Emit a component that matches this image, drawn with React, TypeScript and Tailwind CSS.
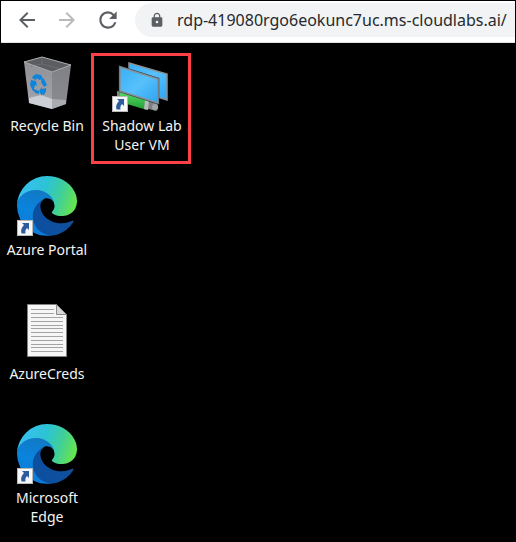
import type { ReactNode } from 'react';
import { MdArrowBack, MdArrowForward, MdLock, MdRefresh } from 'react-icons/md';

function ShortcutArrow() {
  return (
    <svg viewBox="0 0 16 16" className="absolute bottom-0 left-0 size-4" aria-hidden="true">
      <path d="M0 0h16v16H0z" fill="#b9b9b9" />
      <path d="M1 1h14v14H1z" fill="#f7f7f7" />
      <path d="M5 3h7v7l-2-2C8.500 9.500 8 11 8.500 13.500H4.500C3.500 10 4.500 7.500 7 5z" fill="#2d5c9e" />
    </svg>
  );
}

function EdgeIcon({ id }: { id: string }) {
  return (
    <svg viewBox="0 0 256 256" className="size-full" aria-hidden="true">
      <defs>
        <linearGradient id={`${id}-tail`} x1="60" y1="180" x2="235" y2="180" gradientUnits="userSpaceOnUse">
          <stop offset="0" stopColor="#0b4fa0" />
          <stop offset="1" stopColor="#10509e" />
        </linearGradient>
        <linearGradient id={`${id}-body`} x1="100" y1="60" x2="60" y2="240" gradientUnits="userSpaceOnUse">
          <stop offset="0" stopColor="#1278c4" />
          <stop offset="0.5" stopColor="#0a84dc" />
          <stop offset="1" stopColor="#0c7ad6" />
        </linearGradient>
        <linearGradient id={`${id}-wave`} x1="20" y1="60" x2="240" y2="135" gradientUnits="userSpaceOnUse">
          <stop offset="0" stopColor="#36c0ee" />
          <stop offset="0.400" stopColor="#2cc3d4" />
          <stop offset="0.700" stopColor="#3fcf9a" />
          <stop offset="1" stopColor="#66e353" />
        </linearGradient>
      </defs>
      <path
        fill={`url(#${id}-tail)`}
        d="M235.680 190.460c-3.450 1.800-7.020 3.380-10.680 4.720a102.970 102.970 0 0 1-36.160 6.460c-47.660 0-89.180-32.780-89.180-74.860.130-11.500 6.490-22.040 16.610-27.520-43.100 1.800-54.180 46.720-54.180 73.040 0 74.420 68.580 81.960 83.360 81.960 7.960 0 19.980-2.320 27.180-4.580l1.340-.460a128.340 128.340 0 0 0 66.600-52.800 4 4 0 0 0-4.890-5.960z"
      />
      <path
        fill={`url(#${id}-body)`}
        d="M105.730 241.420a79.200 79.200 0 0 1-22.740-21.340 80.720 80.720 0 0 1 29.540-120.820c3.120-1.460 8.460-4.120 15.540-4a32.360 32.360 0 0 1 25.680 13 31.880 31.880 0 0 1 6.360 18.660c0-.200 24.460-79.620-80-79.620-43.900 0-80 41.680-80 78.220a130.150 130.150 0 0 0 12.120 56 128 128 0 0 0 156.380 67.080 75.540 75.540 0 0 1-62.780-8z"
      />
      <path
        fill={`url(#${id}-wave)`}
        d="M152.330 148.860c-.810 1.060-3.300 2.500-3.300 5.660 0 2.600 1.700 5.100 4.720 7.200 14.380 10 41.490 8.680 41.560 8.680a59.560 59.560 0 0 0 30.270-8.350A61.380 61.380 0 0 0 256 109.200c.260-22.410-8-37.310-11.340-43.910C223.460 23.840 177.720 0 128 0A128 128 0 0 0 0 126.200c.480-36.540 36.800-66.050 80-66.050 3.500 0 23.460.340 42 10.070 16.340 8.580 24.900 18.940 30.850 29.210 6.180 10.670 7.280 24.150 7.280 29.520s-2.740 13.330-7.800 19.910z"
      />
    </svg>
  );
}

function RecycleBinIcon() {
  return (
    <svg viewBox="0 0 60 60" className="size-full" aria-hidden="true">
      <defs>
        <linearGradient id="bin-front" x1="0" y1="0" x2="0" y2="1">
          <stop offset="0" stopColor="#8f9196" />
          <stop offset="0.700" stopColor="#9fa0a5" />
          <stop offset="1" stopColor="#b0b2b8" />
        </linearGradient>
        <linearGradient id="bin-side" x1="0" y1="0" x2="0" y2="1">
          <stop offset="0" stopColor="#7f8185" />
          <stop offset="1" stopColor="#8b8c90" />
        </linearGradient>
      </defs>
      <path d="M7 10 35 20v37l-23-6z" fill="url(#bin-front)" />
      <path d="M35 20 54 13l-5 39-14 5z" fill="url(#bin-side)" />
      <path d="M12 46 24 43l11 4v10l-23-6z" fill="#d5d8df" opacity="0.800" />
      <path d="m35 47 14 1v4l-14 5z" fill="#b9bbc0" opacity="0.700" />
      <path d="M7 10 25 5l29 8-19 7z" fill="#5b5d60" />
      <path d="M25 5v7l-11 2M25 12l19 5" fill="none" stroke="#717376" strokeWidth="0.700" />
      <path d="M7 10 25 5l29 8-19 7z" fill="none" stroke="#aeb0b2" />
      <g fill="#0f84dc">
        <path d="m16 24 3-2 5 1 2 4-4 1-2-2-1 2-4-2z" />
        <path d="m14 28 5 1 1 5-2-1-1 4 2 3-3-1-3-6z" />
        <path d="m25 26 2 1 3 6-3 2-3-5z" />
        <path d="m17 37 5 2v3l-4-1z" />
        <path d="m22 39 3-4v2l4-1v3l-2 4-2-1v2z" />
      </g>
    </svg>
  );
}

function RemoteDesktopIcon() {
  return (
    <svg viewBox="0 0 60 60" className="size-full" aria-hidden="true">
      <defs>
        <linearGradient id="screen" x1="0" y1="0" x2="1" y2="1">
          <stop offset="0" stopColor="#36b0f8" />
          <stop offset="0.500" stopColor="#58c0fb" />
          <stop offset="1" stopColor="#2ca4f2" />
        </linearGradient>
        <linearGradient id="cable" x1="0" y1="0" x2="0" y2="1">
          <stop offset="0" stopColor="#58da64" />
          <stop offset="1" stopColor="#1f9d34" />
        </linearGradient>
      </defs>
      <path d="m17 11 38 11v26L17 36z" fill="url(#screen)" stroke="#899096" strokeWidth="1.500" />
      <path d="m5 39 8 1v7l-8-2z" fill="#808386" />
      <path d="m8 40 28 8-1 10-27-8z" fill="url(#cable)" />
      <path d="m33 49 11 2c3 2 3 6 0 8l-11-3z" fill="#7e8184" />
      <path d="m33 48 4 1-1 9-4-1z" fill="#b8bbbd" />
      <circle cx="43" cy="55" r="3" fill="#a1a3a5" />
      <path d="m8 15 38 12v24L8 39z" fill="#33434d" stroke="#33434d" strokeWidth="2.500" />
      <path d="m8 15 38 12v24L8 39z" fill="url(#screen)" stroke="#899096" strokeWidth="1.500" />
    </svg>
  );
}

function TextFileIcon() {
  return (
    <svg viewBox="0 0 60 60" className="size-full" aria-hidden="true">
      <path d="M10.500 4.500h29l10 10v42h-39z" fill="#f6f6f7" stroke="#828282" />
      <path d="M39.500 4.500v10h10z" fill="#d7d8db" stroke="#8b8b8b" />
      <path
        d="M14 9.500h23M14 13.500h23M14 17.500h32M14 21.500h32M14 25.500h32M14 28.500h32M14 32.500h32M14 36.500h32M14 40.500h32M14 44.500h32M14 47.500h32M14 51.500h32"
        stroke="#a3a4a6"
      />
    </svg>
  );
}

type ItemProps = { label: string; children: ReactNode; shortcut?: boolean; highlighted?: boolean };

function DesktopItem({ label, children, shortcut, highlighted }: ItemProps) {
  return (
    <button type="button" className="relative flex flex-col items-center self-start">
      <span className="relative block size-[60px]">
        {children}
        {shortcut && <ShortcutArrow />}
      </span>
      <span className="mt-1 px-1 text-center text-sm leading-[19px] text-[#f4f4f4]">{label}</span>
      {highlighted && (
        <span className="absolute top-px right-0 -bottom-2.5 -left-0.5 border-3 border-[#fb4146]" />
      )}
    </button>
  );
}

export default function App() {
  return (
    <div className="flex min-h-screen flex-col border border-black bg-black font-['Noto_Sans','Open_Sans',sans-serif]">
      <header className="flex h-[42px] items-start overflow-hidden border-b border-[#dfe5e0] bg-white pt-0.5 pl-3.5 text-[#5b5e63]">
        <nav className="flex h-[34px] items-center gap-4" aria-label="Browser">
          <button type="button" aria-label="Back"><MdArrowBack size={24} /></button>
          <button type="button" aria-label="Forward" className="text-[#b8babc]"><MdArrowForward size={24} /></button>
          <button type="button" aria-label="Reload"><MdRefresh size={26} /></button>
        </nav>
        <label className="ml-3.5 flex h-[34px] min-w-0 flex-1 items-center gap-3 rounded-l-full bg-[#f1f3f4] pl-3.5">
          <MdLock size={16} className="shrink-0" />
          <input
            type="text"
            aria-label="Address"
            defaultValue="rdp-419080rgo6eokunc7uc.ms-cloudlabs.ai/"
            className="min-w-0 flex-1 bg-transparent text-base text-[#26292d] outline-none"
          />
        </label>
      </header>
      <main className="grid grid-flow-col grid-cols-[92px_98px] grid-rows-[repeat(4,124px)] pt-[9px]">
        <DesktopItem label="Recycle Bin"><RecycleBinIcon /></DesktopItem>
        <DesktopItem label="Azure Portal" shortcut><EdgeIcon id="portal" /></DesktopItem>
        <DesktopItem label="AzureCreds"><TextFileIcon /></DesktopItem>
        <DesktopItem label="Microsoft Edge" shortcut><EdgeIcon id="edge" /></DesktopItem>
        <DesktopItem label="Shadow Lab User VM" shortcut highlighted><RemoteDesktopIcon /></DesktopItem>
      </main>
    </div>
  );
}
